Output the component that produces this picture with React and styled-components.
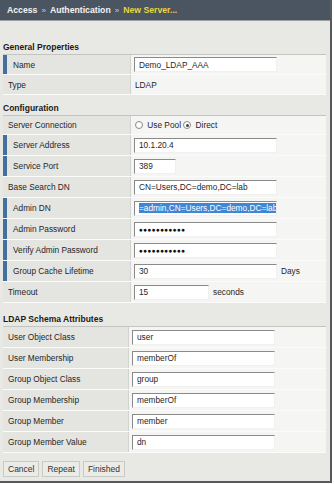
import React from 'react';
import styled, { createGlobalStyle } from 'styled-components';

const Global = createGlobalStyle`
  html, body {
    margin: 0;
    padding: 0;
    background: #ffffff;
  }
  body {
    font-family: "Liberation Sans", Arial, sans-serif;
  }
`;

const Frame = styled.div`
  width: 332px;
  height: 483px;
  background: #e8e8e4;
  border-right: 2px solid #555a5e;
  border-bottom: 2px solid #55595d;
  box-sizing: border-box;
  overflow: hidden;
`;

const Crumbs = styled.div`
  height: 20px;
  background: #4b5461;
  border-bottom: 1px solid #9aa0a6;
  display: flex;
  align-items: center;
  gap: 4px;
  padding-left: 7px;
  font-size: 8.7px;
  font-weight: bold;
  color: #f4f4f4;
`;

const Sep = styled.span`
  font-weight: normal;
  color: #c8ccd0;
  font-size: 8px;
`;

const Current = styled.span`
  color: #e8d640;
`;

const Body = styled.div`
  padding: 20px 3px 0 3px;
  display: flex;
  flex-direction: column;
`;

const SectionTitle = styled.div`
  font-size: 8.5px;
  font-weight: bold;
  color: #1a1a1a;
  height: 13px;
  line-height: 13px;
  margin-top: ${p => p.$top || 0}px;
`;

const Table = styled.div`
  border-top: 1px solid #c4c4c0;
  display: flex;
  flex-direction: column;
  margin-right: 1px;
`;

const Row = styled.div`
  display: grid;
  grid-template-columns: ${p => p.$label || 128}px 1fr;
  height: ${p => p.$h || 20}px;
  border-bottom: 1px solid #fbfbfa;
`;

const Label = styled.div`
  background: #e4e4e1;
  border-right: 1px solid #d2d2ce;
  display: flex;
  align-items: center;
  font-size: 8.3px;
  color: #262626;
  padding-left: ${p => (p.$req ? 6 : 5)}px;
  border-left: ${p => (p.$req ? '4px solid #43709f' : '0')};
`;

const Value = styled.div`
  background: #f5f5f3;
  display: flex;
  align-items: center;
  gap: 4px;
  padding-left: ${p => p.$pad ?? 3}px;
  font-size: 8.3px;
  color: #262626;
`;

const Field = styled.div`
  width: ${p => p.$w || 143}px;
  height: 15px;
  box-sizing: border-box;
  background: #ffffff;
  border-top: 1px solid #8a8a8a;
  border-left: 1px solid #8a8a8a;
  border-right: 1px solid #f0f0f0;
  border-bottom: 1px solid #f0f0f0;
  display: flex;
  align-items: center;
  padding-left: 4px;
  font-size: 8.3px;
  color: #262626;
  white-space: nowrap;
  overflow: hidden;
`;

const Selected = styled.span`
  background: #3f86d6;
  color: #ffffff;
`;

const Dots = styled.span`
  font-size: 6.5px;
  letter-spacing: 0.3px;
  color: #111;
`;

const Unit = styled.span`
  font-size: 8.3px;
  color: #262626;
`;

const Radio = styled.span`
  display: inline-block;
  width: 6px;
  height: 6px;
  border-radius: 50%;
  border: 1px solid #8a8a8a;
  background: #fff;
  position: relative;
  margin-right: 2px;
  vertical-align: -1px;
  &::after {
    content: '';
    display: ${p => (p.$on ? 'block' : 'none')};
    position: absolute;
    left: 1.5px;
    top: 1.5px;
    width: 3px;
    height: 3px;
    border-radius: 50%;
    background: #444;
  }
`;

const Buttons = styled.div`
  display: flex;
  gap: 3px;
  margin-top: 8px;
`;

const Button = styled.button`
  height: 16px;
  padding: 0 4px;
  font-family: "Liberation Sans", Arial, sans-serif;
  font-size: 8.5px;
  color: #333;
  background: #ebebe8;
  border: 1px solid #c9c9c5;
  border-radius: 0;
`;

const config = [
  { label: 'Server Address', req: true, value: '10.1.20.4' },
  { label: 'Service Port', req: true, value: '389', w: 42 },
  { label: 'Base Search DN', value: 'CN=Users,DC=demo,DC=lab' },
  { label: 'Admin DN', req: true, selected: '=admin,CN=Users,DC=demo,DC=lab' },
  { label: 'Admin Password', req: true, password: true },
  { label: 'Verify Admin Password', req: true, password: true },
  { label: 'Group Cache Lifetime', req: true, value: '30', unit: 'Days' },
  { label: 'Timeout', value: '15', w: 75, unit: 'seconds' },
];

const schema = [
  ['User Object Class', 'user'],
  ['User Membership', 'memberOf'],
  ['Group Object Class', 'group'],
  ['Group Membership', 'memberOf'],
  ['Group Member', 'member'],
  ['Group Member Value', 'dn'],
];

export default function App() {
  return (
    <Frame>
      <Global />
      <Crumbs>
        <span>Access</span>
        <Sep>»</Sep>
        <span>Authentication</span>
        <Sep>»</Sep>
        <Current>New Server...</Current>
      </Crumbs>
      <Body>
        <SectionTitle>General Properties</SectionTitle>
        <Table>
          <Row $h={19}>
            <Label $req>Name</Label>
            <Value><Field>Demo_LDAP_AAA</Field></Value>
          </Row>
          <Row $h={19}>
            <Label>Type</Label>
            <Value $pad={4}>LDAP</Value>
          </Row>
        </Table>

        <SectionTitle $top={7}>Configuration</SectionTitle>
        <Table>
          <Row $h={18}>
            <Label>Server Connection</Label>
            <Value $pad={4}>
              <span><Radio /> Use Pool <Radio $on /> Direct</span>
            </Value>
          </Row>
          {config.map(r => (
            <Row key={r.label}>
              <Label $req={r.req}>{r.label}</Label>
              <Value>
                <Field $w={r.w}>
                  {r.password ? <Dots>●●●●●●●●●●●</Dots> : r.selected ? <Selected>{r.selected}</Selected> : r.value}
                </Field>
                {r.unit && <Unit>{r.unit}</Unit>}
              </Value>
            </Row>
          ))}
        </Table>

        <SectionTitle $top={10}>LDAP Schema Attributes</SectionTitle>
        <Table>
          {schema.map(([l, v]) => (
            <Row key={l} $label={126}>
              <Label>{l}</Label>
              <Value><Field $w={143}>{v}</Field></Value>
            </Row>
          ))}
        </Table>

        <Buttons>
          <Button>Cancel</Button>
          <Button>Repeat</Button>
          <Button>Finished</Button>
        </Buttons>
      </Body>
    </Frame>
  );
}
